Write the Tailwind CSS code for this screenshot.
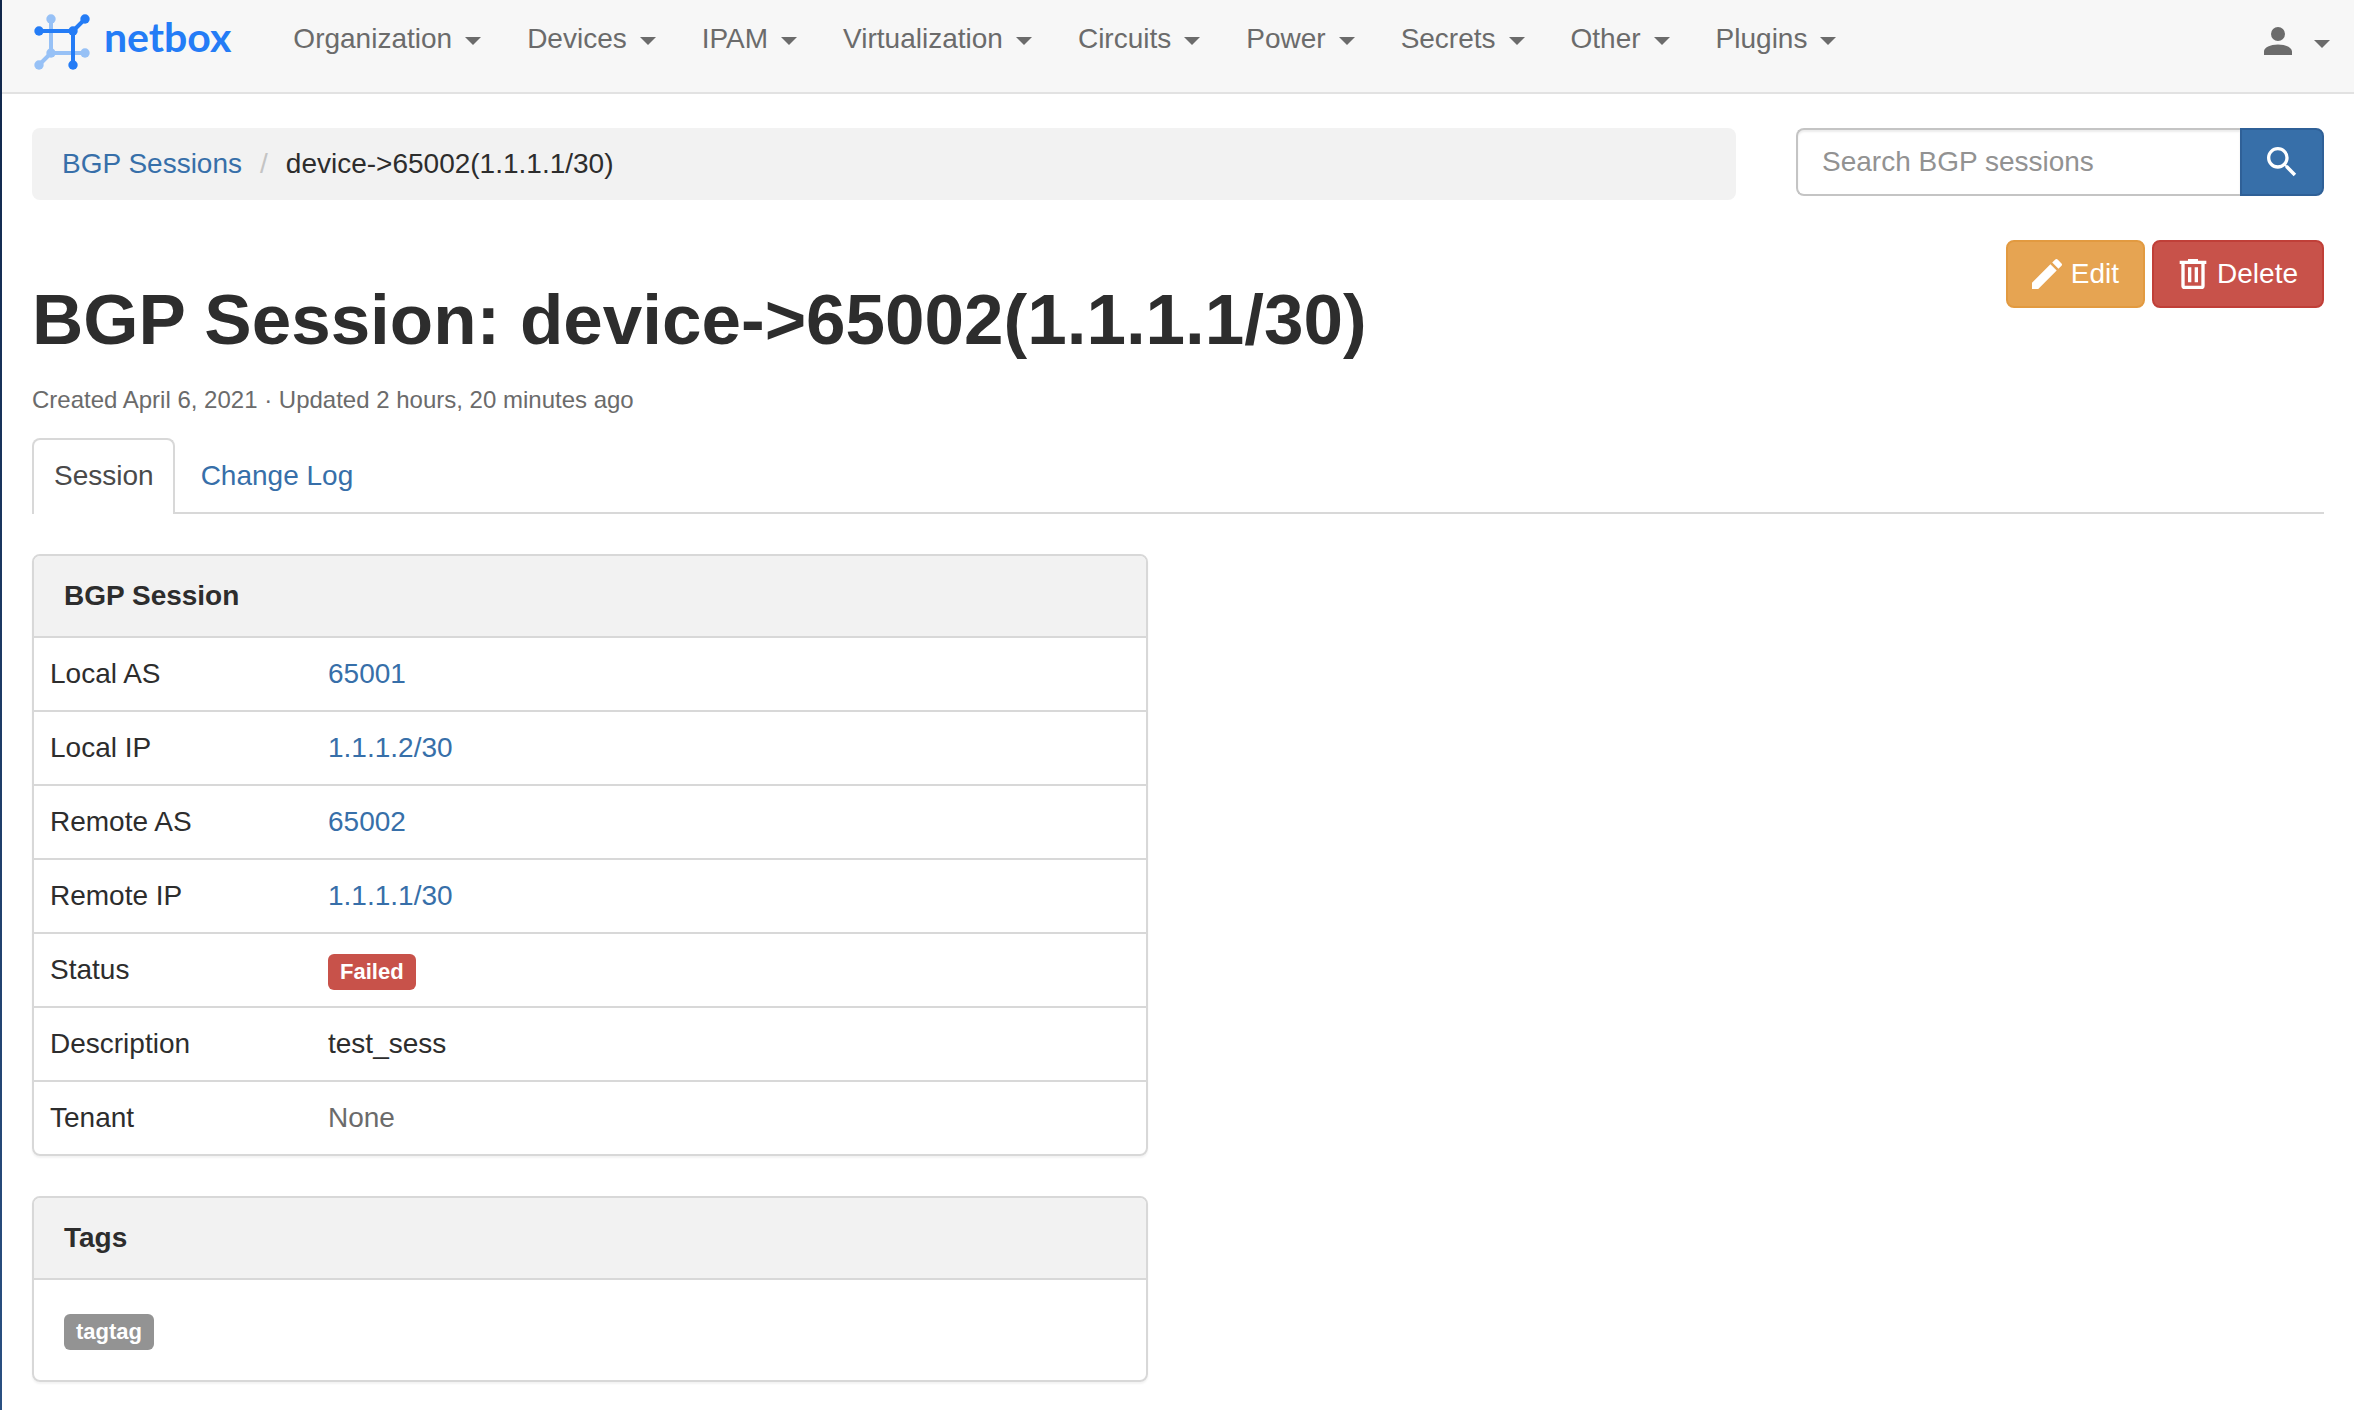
<!DOCTYPE html>
<html lang="en">
<head>
<meta charset="utf-8">
<meta name="viewport" content="width=device-width, initial-scale=1">
<title>BGP Session: device-&gt;65002(1.1.1.1/30)</title>
<script src="https://cdn.jsdelivr.net/npm/@tailwindcss/browser@4"></script>
</head>
<body class="min-h-screen bg-white font-['Liberation_Sans',Arial,sans-serif] text-[28px] leading-10 text-[#2d2d2d]">
<div class="flex min-h-screen">
<div class="w-[2px] shrink-0 bg-linear-to-b from-[#10264a] to-[#2a5082]"></div>
<div class="min-w-0 flex-1">

<header class="flex items-start justify-between border-b-2 border-[#e2e2e2] bg-[#f7f7f7] pr-6 pl-8 pb-[31px]">
  <div class="flex items-start">
    <a href="#" class="mr-[39px] flex h-11 items-start gap-3 pt-3 font-[Lato,sans-serif] text-[41px] leading-[50px] font-bold text-[#247cf6]">
      <svg class="h-[60px] w-[58px]" viewBox="34 12 58 60" fill="none" stroke-width="4" aria-hidden="true">
        <g stroke="#97c1f6"><path d="M51 19V53H85M51 53L39 65"/></g>
        <g fill="#97c1f6"><circle cx="51" cy="19" r="4.7"/><circle cx="51" cy="53" r="4.7"/><circle cx="85" cy="53" r="4.7"/><circle cx="39" cy="65" r="4.7"/></g>
        <g stroke="#247cf6"><path d="M39 31H73V65M73 31L85 19"/></g>
        <g fill="#247cf6"><circle cx="85" cy="19" r="4.7"/><circle cx="73" cy="31" r="4.7"/><circle cx="39" cy="31" r="4.7"/><circle cx="73" cy="65" r="4.7"/></g>
      </svg>
      <span>netbox</span>
    </a>
    <nav class="flex pt-[19px] text-[#6b6b6b]" aria-label="Main">
      <button type="button" class="flex items-center gap-[13px] px-[23px]">Organization<svg class="mt-1 h-2 w-4" viewBox="0 0 16 8" fill="currentColor" aria-hidden="true"><path d="M0 0H16L8 8Z"/></svg></button>
      <button type="button" class="flex items-center gap-[13px] px-[23px]">Devices<svg class="mt-1 h-2 w-4" viewBox="0 0 16 8" fill="currentColor" aria-hidden="true"><path d="M0 0H16L8 8Z"/></svg></button>
      <button type="button" class="flex items-center gap-[13px] px-[23px]">IPAM<svg class="mt-1 h-2 w-4" viewBox="0 0 16 8" fill="currentColor" aria-hidden="true"><path d="M0 0H16L8 8Z"/></svg></button>
      <button type="button" class="flex items-center gap-[13px] px-[23px]">Virtualization<svg class="mt-1 h-2 w-4" viewBox="0 0 16 8" fill="currentColor" aria-hidden="true"><path d="M0 0H16L8 8Z"/></svg></button>
      <button type="button" class="flex items-center gap-[13px] px-[23px]">Circuits<svg class="mt-1 h-2 w-4" viewBox="0 0 16 8" fill="currentColor" aria-hidden="true"><path d="M0 0H16L8 8Z"/></svg></button>
      <button type="button" class="flex items-center gap-[13px] px-[23px]">Power<svg class="mt-1 h-2 w-4" viewBox="0 0 16 8" fill="currentColor" aria-hidden="true"><path d="M0 0H16L8 8Z"/></svg></button>
      <button type="button" class="flex items-center gap-[13px] px-[23px]">Secrets<svg class="mt-1 h-2 w-4" viewBox="0 0 16 8" fill="currentColor" aria-hidden="true"><path d="M0 0H16L8 8Z"/></svg></button>
      <button type="button" class="flex items-center gap-[13px] px-[23px]">Other<svg class="mt-1 h-2 w-4" viewBox="0 0 16 8" fill="currentColor" aria-hidden="true"><path d="M0 0H16L8 8Z"/></svg></button>
      <button type="button" class="flex items-center gap-[13px] px-[23px]">Plugins<svg class="mt-1 h-2 w-4" viewBox="0 0 16 8" fill="currentColor" aria-hidden="true"><path d="M0 0H16L8 8Z"/></svg></button>
    </nav>
  </div>
  <button type="button" aria-label="User menu" class="mt-[21px] flex h-10 items-center gap-[22px] text-[#6b6b6b]">
    <svg class="h-7 w-7" viewBox="4 4 16 16" fill="currentColor" aria-hidden="true"><path d="M12 4A4 4 0 0 1 16 8A4 4 0 0 1 12 12A4 4 0 0 1 8 8A4 4 0 0 1 12 4M12 14C16.42 14 20 15.79 20 18V20H4V18C4 15.79 7.58 14 12 14Z"/></svg>
    <svg class="mt-1.5 h-2 w-4" viewBox="0 0 16 8" fill="currentColor" aria-hidden="true"><path d="M0 0H16L8 8Z"/></svg>
  </button>
</header>

<main class="px-[30px] pt-[34px]">
  <div class="grid grid-cols-12 items-start gap-x-[60px]">
    <nav class="col-span-9 rounded-lg bg-[#f2f2f2] px-[30px] py-4" aria-label="Breadcrumb">
      <ol class="flex">
        <li><a href="#" class="text-[#376fa9]">BGP Sessions</a></li>
        <li class="px-[18px] text-[#c4c4c4]" aria-hidden="true">/</li>
        <li>device-&gt;65002(1.1.1.1/30)</li>
      </ol>
    </nav>
    <form class="col-span-3 flex h-[68px]">
      <input type="text" aria-label="Search BGP sessions" placeholder="Search BGP sessions" class="min-w-0 flex-1 rounded-l-lg border-2 border-r-0 border-[#c4c4c4] bg-white px-6 shadow-[inset_0_2px_2px_rgba(0,0,0,0.075)] placeholder:text-[#929292]">
      <button type="submit" aria-label="Search" class="flex w-[84px] items-center justify-center rounded-r-lg border-2 border-[#2f6097] bg-[#376fa9] text-white">
        <svg class="h-10 w-10" viewBox="0 0 24 24" fill="currentColor" aria-hidden="true"><path d="M9.5 3A6.5 6.5 0 0 1 16 9.5C16 11.11 15.41 12.59 14.44 13.73L14.71 14H15.5L20.5 19L19 20.5L14 15.5V14.71L13.73 14.44C12.59 15.41 11.11 16 9.5 16A6.5 6.5 0 0 1 3 9.5A6.5 6.5 0 0 1 9.5 3M9.5 5C7 5 5 7 5 9.5C5 12 7 14 9.5 14C12 14 14 12 14 9.5C14 7 12 5 9.5 5Z"/></svg>
      </button>
    </form>
  </div>

  <div class="mt-10 flex items-start justify-between">
    <h1 class="pt-10 text-[71px] leading-20 font-bold">BGP Session: device-&gt;65002(1.1.1.1/30)</h1>
    <div class="flex gap-[7px] text-white">
      <button type="button" class="flex h-[68px] items-center gap-[9px] rounded-lg border-2 border-[#e29a40] bg-[#e6a452] px-6">
        <svg class="h-[30px] w-[30px]" viewBox="3 3 18 18" fill="currentColor" aria-hidden="true"><path d="M20.71 7.04C21.1 6.65 21.1 6 20.71 5.63L18.37 3.29C18 2.9 17.35 2.9 16.96 3.29L15.12 5.12L18.87 8.87M3 17.25V21H6.75L17.81 9.93L14.06 6.18L3 17.25Z"/></svg>Edit</button>
      <button type="button" class="flex h-[68px] items-center gap-[9px] rounded-lg border-2 border-[#c03f38] bg-[#c8524a] px-6">
        <svg class="h-[30px] w-[30px]" viewBox="3 3 18 18" fill="currentColor" aria-hidden="true"><path d="M9 3V4H4V6H5V19A2 2 0 0 0 7 21H17A2 2 0 0 0 19 19V6H20V4H15V3H9M7 6H17V19H7V6M9 8V17H11V8H9M13 8V17H15V8H13Z"/></svg>Delete</button>
    </div>
  </div>
  <p class="mt-6 text-2xl leading-8 text-[#6b6b6b]">Created April 6, 2021 · Updated 2 hours, 20 minutes ago</p>

  <div class="mt-[22px] flex border-b-2 border-[#d8d8d8]">
    <a href="#" aria-current="page" class="-mb-0.5 rounded-t-lg border-2 border-b-0 border-[#d8d8d8] bg-white pt-4 pr-[19px] pb-[18px] pl-5 text-[#4a4a4a]">Session</a>
    <a href="#" class="px-[26px] pt-[18px] pb-4 text-[#376fa9]">Change Log</a>
  </div>

  <div class="mt-10 grid grid-cols-2 gap-x-[60px]">
    <div class="flex flex-col gap-10">
      <section class="overflow-hidden rounded-lg border-2 border-[#d8d8d8] shadow-[0_2px_2px_rgba(0,0,0,0.05)]">
        <h2 class="border-b-2 border-[#d8d8d8] bg-[#f2f2f2] px-[30px] py-5 font-bold">BGP Session</h2>
        <table class="w-full table-fixed text-left">
          <tbody class="divide-y-2 divide-[#d8d8d8]">
            <tr><th scope="row" class="w-1/4 px-4 py-4 font-normal">Local AS</th><td class="px-4 py-4"><a href="#" class="text-[#376fa9]">65001</a></td></tr>
            <tr><th scope="row" class="px-4 py-4 font-normal">Local IP</th><td class="px-4 py-4"><a href="#" class="text-[#376fa9]">1.1.1.2/30</a></td></tr>
            <tr><th scope="row" class="px-4 py-4 font-normal">Remote AS</th><td class="px-4 py-4"><a href="#" class="text-[#376fa9]">65002</a></td></tr>
            <tr><th scope="row" class="px-4 py-4 font-normal">Remote IP</th><td class="px-4 py-4"><a href="#" class="text-[#376fa9]">1.1.1.1/30</a></td></tr>
            <tr><th scope="row" class="px-4 py-4 font-normal">Status</th><td class="px-4 py-4"><div class="flex h-10 items-end"><span class="rounded-md bg-[#c8524a] px-3 text-[22px] leading-9 font-bold text-white">Failed</span></div></td></tr>
            <tr><th scope="row" class="px-4 py-4 font-normal">Description</th><td class="px-4 py-4">test_sess</td></tr>
            <tr><th scope="row" class="px-4 py-4 font-normal">Tenant</th><td class="px-4 py-4 text-[#6b6b6b]">None</td></tr>
          </tbody>
        </table>
      </section>
      <section class="overflow-hidden rounded-lg border-2 border-[#d8d8d8] shadow-[0_2px_2px_rgba(0,0,0,0.05)]">
        <h2 class="border-b-2 border-[#d8d8d8] bg-[#f2f2f2] px-[30px] py-5 font-bold">Tags</h2>
        <div class="p-[30px]"><div class="flex h-10 items-end"><span class="rounded-md bg-[#939393] px-3 text-[22px] leading-9 font-bold text-white">tagtag</span></div></div>
      </section>
    </div>
  </div>
</main>
</div>
</div>
</body>
</html>
